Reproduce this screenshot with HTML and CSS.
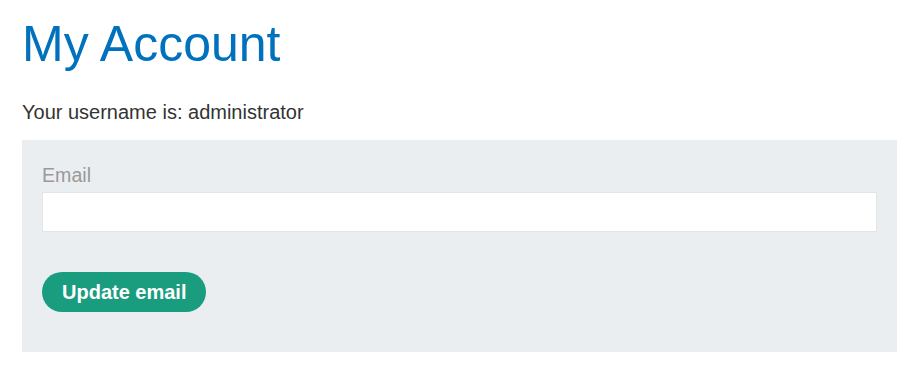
FILE: index.html
```html
<!DOCTYPE html>
<html>
<head>
<meta charset="utf-8">
<link rel="stylesheet" href="styles.css">
</head>
<body>
<div class="page">
  <h1 class="title">My Account</h1>
  <p class="username">Your username is: administrator</p>
  <form class="panel">
    <label class="label" for="email">Email</label>
    <input class="input" id="email" type="email">
    <button class="button" type="button">Update email</button>
  </form>
</div>
</body>
</html>
```
FILE: styles.css
```css
html, body {
  margin: 0;
  padding: 0;
  background: #fff;
}
body {
  font-family: "Liberation Sans", Arial, sans-serif;
  color: #333332;
}
.page {
  padding: 16px 21px 0 22px;
}
.title {
  margin: 0;
  font-size: 50px;
  line-height: 56px;
  font-weight: normal;
  color: #0071bc;
}
.username {
  margin: 29px 0 0;
  font-size: 20px;
  line-height: 23px;
}
.panel {
  margin-top: 16px;
  background: #ebeef0;
  padding: 24px 20px 40px;
  display: flex;
  flex-direction: column;
  align-items: flex-start;
}
.label {
  font-size: 19.6px;
  line-height: 22px;
  color: #999;
}
.input {
  margin-top: 6px;
  box-sizing: border-box;
  width: 100%;
  height: 40px;
  border: 1px solid #e2e4e6;
  background: #fff;
  outline: none;
}
.button {
  margin-top: 40px;
  height: 40px;
  padding: 0 20px;
  border: none;
  border-radius: 20px;
  background: #1a9c7e;
  color: #fff;
  font-family: "Liberation Sans", Arial, sans-serif;
  font-weight: bold;
  font-size: 20px;
}
```
